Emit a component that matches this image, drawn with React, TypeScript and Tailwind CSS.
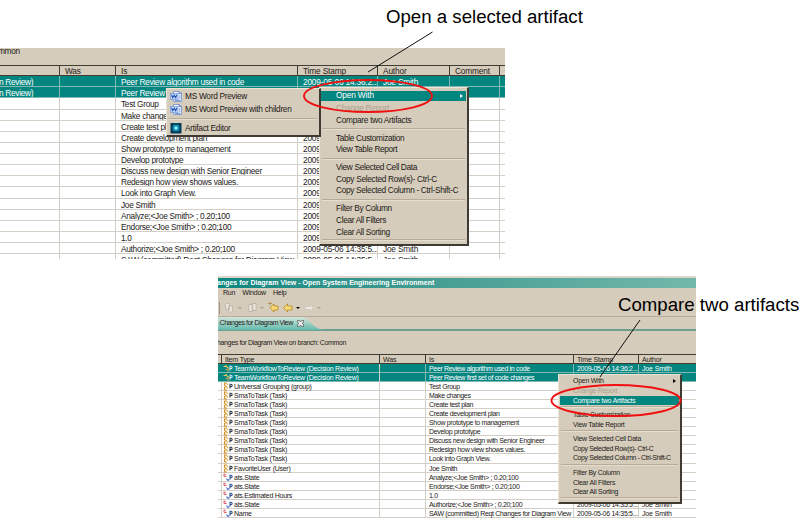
import React from "react";

const changes = [
  ["flow", "TeamWorkflowToReview (Decision Review)", "Peer Review algorithm used in code"],
  ["flow", "TeamWorkflowToReview (Decision Review)", "Peer Review first set of code changes"],
  ["item", "Universal Grouping (group)", "Test Group"],
  ["item", "SmaToTask (Task)", "Make changes"],
  ["item", "SmaToTask (Task)", "Create test plan"],
  ["item", "SmaToTask (Task)", "Create development plan"],
  ["item", "SmaToTask (Task)", "Show prototype to management"],
  ["item", "SmaToTask (Task)", "Develop prototype"],
  ["item", "SmaToTask (Task)", "Discuss new design with Senior Engineer"],
  ["item", "SmaToTask (Task)", "Redesign how view shows values."],
  ["item", "SmaToTask (Task)", "Look into Graph View."],
  ["item", "FavoriteUser (User)", "Joe Smith"],
  ["attr", "ats.State", "Analyze;<Joe Smith> ; 0.20;100"],
  ["attr", "ats.State", "Endorse;<Joe Smith> ; 0.20;100"],
  ["attr", "ats.Estimated Hours", "1.0"],
  ["attr", "ats.State", "Authorize;<Joe Smith> ; 0.20;100"],
  ["attr", "Name", "SAW (committed) Reqt Changes for Diagram View"],
];

function stamp(i: number) {
  return i < 2 ? "2009-05-06 14:36:2..." : "2009-05-06 14:35:5...";
}

function RowIcon({ kind }: { kind: string }) {
  if (kind === "attr")
    return (
      <svg className="h-[9px] w-[10px] shrink-0" viewBox="0 0 10 9" fill="none">
        <path d="M1 .8v2.700h2.500M1 1l2 1" stroke="#e05a6a" />
        <path d="M3.500 5.500l1.500 2 1.300-1" stroke="#4a6fd0" strokeWidth="1.200" />
        <path d="M7 6.500V2.300h1a1.100 1.100 0 010 2.300H7" stroke="#2b5090" strokeWidth="1.100" />
      </svg>
    );
  const flow = kind === "flow";
  return (
    <svg className="h-[9px] w-[10px] shrink-0" viewBox="0 0 10 9" fill="none">
      {flow ? (
        <>
          <path d="M.5 2.500h4M2.500 1l2 2.500L6 4.500" stroke="#e8c25a" strokeWidth="1.200" />
          <path d="M2.500 5.500h3M4 7h2.500" stroke="#d8a050" />
        </>
      ) : (
        <>
          <path d="M4 1H1.500v2.500l1.500 1-1.500 1V8H4" stroke="#d0922a" strokeWidth="1.200" />
          <path d="M3.500 1.500l1.500 1.500M3.500 5l1.500 1.500" stroke="#e5b64f" strokeWidth="1.300" />
        </>
      )}
      <path d="M7 6.500V2.300h1a1.100 1.100 0 010 2.300H7" stroke={flow ? "#d5e5ee" : "#303848"} strokeWidth="1.100" />
    </svg>
  );
}

function WordIcon() {
  return (
    <svg className="h-[11px] w-[12px] shrink-0" viewBox="0 0 12 11" fill="none">
      <path d="M3.500 .5h5.500l2.500 2v8h-8z" fill="#f4f8ff" stroke="#6f8fd0" strokeWidth=".8" />
      <path d="M9 .5v2h2.500M9 5h1.500M9 7h1.500M5 9.300h5.500" stroke="#3f68c0" strokeWidth=".8" />
      <rect x=".4" y="2.500" width="7.600" height="5.800" fill="#c9dbf8" stroke="#6f92d8" strokeWidth=".7" />
      <path d="M1.500 3.800l1.200 3 1.500-2.700 1.500 2.700 1.200-3" stroke="#2555b5" strokeWidth="1.100" />
    </svg>
  );
}

function EditorIcon() {
  return (
    <svg className="h-[11px] w-[12px] shrink-0" viewBox="0 0 12 11">
      <rect x=".5" width="11" height="10.500" fill="#063d58" />
      <rect x="3" y="2" width="6" height="6" fill="#0d8fb5" />
      <rect x="4.500" y="3.500" width="3" height="3" fill="#8ff4ff" />
      <path d="M6 0v3M6 7.500v3M.5 5h3M8.500 5h3" stroke="#0a7698" />
    </svg>
  );
}

function Sep({ className }: { className: string }) {
  return (
    <div className={`mx-[2px] flex items-center ${className}`}>
      <div className="h-[2px] w-full border-t border-b border-t-[#b5ab98] border-b-[#e6dfd0]" />
    </div>
  );
}

function MenuText({ children, className }: { children: React.ReactNode; className: string }) {
  return <div className={`flex items-center ${className}`}>{children}</div>;
}

const menuFrame =
  "absolute flex flex-col whitespace-nowrap border-t border-l border-r-2 border-b-2 border-t-[#ece5d8] border-l-[#ece5d8] border-r-[#3f3b33] border-b-[#3f3b33] bg-[#d6ccbb] text-[#1c1a17]";

function OpenMenu() {
  const item = "h-[11.8px] pl-[16px]";
  return (
    <div className={`${menuFrame} top-[39px] left-[319px] h-[159px] w-[150px] text-[8.300px] leading-[11px] tracking-[-0.340px]`}>
      <div className="mx-[1px] mt-[3px] flex h-[9.500px] shrink-0 items-center justify-between bg-[#038580] pr-[3px] pl-[15px] tracking-[-0.150px] text-white">
        <span>Open With</span>
        <span className="border-y-[2.500px] border-l-[3.500px] border-y-transparent border-l-white" />
      </div>
      <MenuText className="mt-[1px] h-[13px] pl-[16px] tracking-[-0.250px] text-[#aba191]">Change Report</MenuText>
      <MenuText className="h-[12px] pl-[16px] tracking-[-0.280px]">Compare two Artifacts</MenuText>
      <Sep className="h-[5.700px]" />
      <MenuText className={item}>Table Customization</MenuText>
      <MenuText className={item}>View Table Report</MenuText>
      <Sep className="h-[5.700px]" />
      <MenuText className={item}>View Selected Cell Data</MenuText>
      <MenuText className={`${item} tracking-[-0.300px]`}>Copy Selected Row(s)- Ctrl-C</MenuText>
      <MenuText className={`${item} tracking-[-0.320px]`}>Copy Selected Column - Ctrl-Shift-C</MenuText>
      <Sep className="h-[5.700px]" />
      <MenuText className={item}>Filter By Column</MenuText>
      <MenuText className={item}>Clear All Filters</MenuText>
      <MenuText className={item}>Clear All Sorting</MenuText>
      <Sep className="h-[5px]" />
    </div>
  );
}

function PreviewMenu() {
  return (
    <div className={`${menuFrame} top-[40px] left-[166px] h-[49px] w-[155px] text-[8.300px] leading-[11px] tracking-[-0.280px]`}>
      <MenuText className="mt-[1px] h-[13px] gap-[3px] pl-[3px]"><WordIcon />MS Word Preview</MenuText>
      <MenuText className="h-[13px] gap-[3px] pl-[3px]"><WordIcon />MS Word Preview with children</MenuText>
      <Sep className="h-[6px]" />
      <MenuText className="h-[12px] gap-[3px] pl-[3px]"><EditorIcon />Artifact Editor</MenuText>
    </div>
  );
}

function CompareMenu() {
  const item = "h-[9.700px] pl-[14px]";
  return (
    <div className={`${menuFrame} top-[98px] left-[340px] h-[130px] w-[124px] text-[6.900px] leading-[9px] tracking-[-0.250px]`}>
      <div className="mt-[1px] flex h-[9.500px] shrink-0 items-center justify-between pr-[4px] pl-[14px] tracking-[-0.200px]">
        <span>Open With</span>
        <span className="border-y-[2px] border-l-[3px] border-y-transparent border-l-black" />
      </div>
      <MenuText className="h-[10px] pl-[14px] tracking-[-0.200px] text-[#aba191]">Change Report</MenuText>
      <div className="mx-[1px] flex h-[9.500px] shrink-0 items-center bg-[#038580] pl-[13px] tracking-[-0.240px] text-white">Compare two Artifacts</div>
      <Sep className="h-[4.700px]" />
      <MenuText className={item}>Table Customization</MenuText>
      <MenuText className={item}>View Table Report</MenuText>
      <Sep className="h-[4.700px]" />
      <MenuText className={item}>View Selected Cell Data</MenuText>
      <MenuText className={`${item} tracking-[-0.370px]`}>Copy Selected Row(s)- Ctrl-C</MenuText>
      <MenuText className={`${item} tracking-[-0.370px]`}>Copy Selected Column - Ctrl-Shift-C</MenuText>
      <Sep className="h-[4.700px]" />
      <MenuText className={item}>Filter By Column</MenuText>
      <MenuText className={item}>Clear All Filters</MenuText>
      <MenuText className={item}>Clear All Sorting</MenuText>
      <Sep className="h-[3px]" />
    </div>
  );
}

function TopPanel() {
  const cols = "grid grid-cols-[60px_56px_182px_80px_72px_50px_5px]";
  const head = "border-r border-[#403c34] pl-[5px]";
  return (
    <section className="relative h-[211px] w-[505px] bg-[#d6ccbb] text-[8.300px] tracking-[-0.290px] text-[#1c1a17]">
      <div className="h-full overflow-hidden whitespace-nowrap">
        <div className="h-[17px] leading-[6px]"><span className="-ml-[2px]">mmon</span></div>
        <div className={`${cols} h-[11.200px] border-t border-b border-[#403c34] leading-[11px] tracking-[-0.150px]`}>
          <div className={head} />
          <div className={head}>Was</div>
          <div className={head}>Is</div>
          <div className={head}>Time Stamp</div>
          <div className={head}>Author</div>
          <div className={head}>Comment</div>
          <div />
        </div>
        {changes.map((c, i) => {
          const sel = i < 2;
          const cell = sel ? "overflow-hidden border-r border-[#7fb9b2] pl-[5px]" : "overflow-hidden border-r border-[#d3cec6] pl-[5px]";
          return (
            <div
              key={i}
              className={`${cols} h-[11.130px] border-b leading-[12.500px] ${sel ? "border-[#7fb9b2] bg-[#038580] text-white" : "border-[#d3cec6] bg-white"}`}
            >
              <div className={cell}>{sel && <span className="-ml-[6px]">n Review)</span>}</div>
              <div className={cell} />
              <div className={cell}>{c[2]}</div>
              <div className={`${cell} tracking-[-0.200px]`}>{stamp(i)}</div>
              <div className={`${cell} tracking-[-0.200px]`}>Joe Smith</div>
              <div className={cell} />
              <div />
            </div>
          );
        })}
      </div>
      <OpenMenu />
      <PreviewMenu />
    </section>
  );
}

function Toolbar() {
  return (
    <svg className="h-[16px] w-[120px]" viewBox="0 0 120 16" fill="none">
      <path d="M1.500 2v12" stroke="#9c9384" />
      <path d="M7.500 3.500h4v6h-4zM10.500 6h4v6h-4z" fill="#e8e3da" stroke="#c4bbad" />
      <path d="M31 4.500h4v7h-4zM34 3.500h4v7h-4z" fill="#eeeae2" stroke="#beb5a7" />
      <path d="M20 7h4l-2 2zM42 7h4l-2 2zM99 7h4l-2 2z" fill="#aaa08f" />
      <path d="M52 7.500l4-3.500v2h4v4h-4v2z" fill="#f7db7a" stroke="#b98e28" strokeWidth=".9" />
      <path d="M50 3.500h4M52 2v3" stroke="#a88b41" strokeWidth=".8" />
      <path d="M65.500 7.500l4-3.500v2H74v4h-4.500v2z" fill="#f7db7a" stroke="#b98e28" strokeWidth=".9" />
      <path d="M78 7h4l-2 2z" fill="#000" />
      <path d="M95 7.500L92 4.500v2h-5v3h5v2z" fill="#eeeae3" stroke="#c9c0b3" strokeWidth=".7" />
    </svg>
  );
}

function EditorTab() {
  return (
    <div className="relative h-[14.500px] border-t border-b-2 border-t-[#b5ab9b] border-b-[#6d9f8e]">
      <svg className="absolute top-0 left-0 h-[13px] w-[108px]" viewBox="0 0 108 13">
        <defs>
          <linearGradient id="tab" x1="0" y1="0" x2="0" y2="1">
            <stop offset="0" stopColor="#d5e6dc" />
            <stop offset="1" stopColor="#62b9ad" />
          </linearGradient>
        </defs>
        <path d="M0 0h82c10 0 12 13 26 13H0z" fill="url(#tab)" />
      </svg>
      <div className="relative flex h-[12px] items-center gap-[4px] pl-[1.500px]">
        <span className="text-[7px] tracking-[-0.420px]">Changes for Diagram View</span>
        <svg className="h-[7px] w-[7px]" viewBox="0 0 7 7" fill="none">
          <path d="M.5 .5h2l1 1.500 1-1.500h2v2L5 3.500l1.500 1v2h-2l-1-1.500-1 1.500h-2v-2l1.500-1-1.500-1z" fill="#eee" stroke="#4c5552" strokeWidth=".7" />
        </svg>
      </div>
    </div>
  );
}

function BottomPanel() {
  const cols = "grid grid-cols-[4px_158px_46px_148px_65px_57px]";
  const head = "border-r border-[#403c34] pl-[3px]";
  return (
    <section className="relative h-[244px] w-[478px] bg-[#d6ccbb] text-[7px] tracking-[-0.300px] text-[#1c1a17]">
      <div className="flex h-full flex-col overflow-hidden whitespace-nowrap">
        <div className="h-[2px] shrink-0 bg-[#dcd6ca]" />
        <div className="h-[9.500px] shrink-0 bg-linear-to-r from-[#078780] to-[#72b8aa] text-[7px] leading-[9.500px] font-bold tracking-normal text-white">
          <span className="-ml-[1px]">anges for Diagram View - Open System Engineering Environment</span>
        </div>
        <div className="flex h-[12px] shrink-0 items-center gap-[7px] pl-[5px] text-[7px] tracking-[-0.200px]">
          <span>Run</span><span>Window</span><span>Help</span>
        </div>
        <div className="flex h-[16.500px] shrink-0 items-center"><Toolbar /></div>
        <div className="shrink-0"><EditorTab /></div>
        <div className="h-[23.500px] shrink-0 leading-[23px] tracking-[-0.360px]"><span className="-ml-px">hanges for Diagram View on branch: Common</span></div>
        <div className={`${cols} h-[9.700px] shrink-0 border-t border-b border-[#403c34] leading-[9px] tracking-[-0.150px]`}>
          <div className="border-r border-[#403c34]" />
          <div className={head}>Item Type</div>
          <div className={head}>Was</div>
          <div className={head}>Is</div>
          <div className={head}>Time Stamp</div>
          <div className="pl-[3px]">Author</div>
        </div>
        {changes.map((c, i) => {
          const sel = i < 2;
          const cell = sel ? "overflow-hidden border-r border-[#7fb9b2] pl-[3px]" : "overflow-hidden border-r border-[#d3cec6] pl-[3px]";
          return (
            <div
              key={i}
              className={`${cols} h-[9.090px] shrink-0 border-b leading-[9px] ${sel ? "border-[#7fb9b2] bg-[#038580] text-white" : "border-[#d3cec6] bg-white"}`}
            >
              <div className={sel ? "" : "border-r border-[#d3cec6]"} />
              <div className="flex gap-[1px] overflow-hidden border-r border-[#d3cec6] pl-[1px] tracking-[-0.260px]"><RowIcon kind={c[0]} /><span>{c[1]}</span></div>
              <div className={cell} />
              <div className={`${cell} tracking-[-0.330px]`}>{c[2]}</div>
              <div className={cell}>{stamp(i)}</div>
              <div className="pl-[3px] tracking-[-0.150px]">Joe Smith</div>
            </div>
          );
        })}
        <div className="grow bg-white" />
      </div>
      <CompareMenu />
    </section>
  );
}

export default function App() {
  return (
    <main className="relative h-[520px] w-[808px] overflow-hidden bg-white font-['Liberation_Sans',Arial,sans-serif]">
      <h1 className="h-[48px] pt-[5px] pl-[386px] text-[18.650px] leading-[24px] whitespace-nowrap text-black">Open a selected artifact</h1>
      <TopPanel />
      <div className="mt-[17px] ml-[218px]"><BottomPanel /></div>
      <h2 className="absolute top-[293px] left-[618px] text-[18.650px] leading-[24px] whitespace-nowrap text-black">Compare two artifacts</h2>
      <svg className="pointer-events-none absolute inset-0 h-[520px] w-[808px]" viewBox="0 0 808 520" fill="none">
        <path d="M432.500 32L368 72M640 320l-40 57" stroke="#111" strokeWidth="1" />
        <ellipse cx="368" cy="96" rx="64" ry="16" stroke="#f01010" strokeWidth="1.900" />
        <ellipse cx="616" cy="400.500" rx="64.500" ry="15.500" stroke="#f01010" strokeWidth="1.900" />
      </svg>
    </main>
  );
}
